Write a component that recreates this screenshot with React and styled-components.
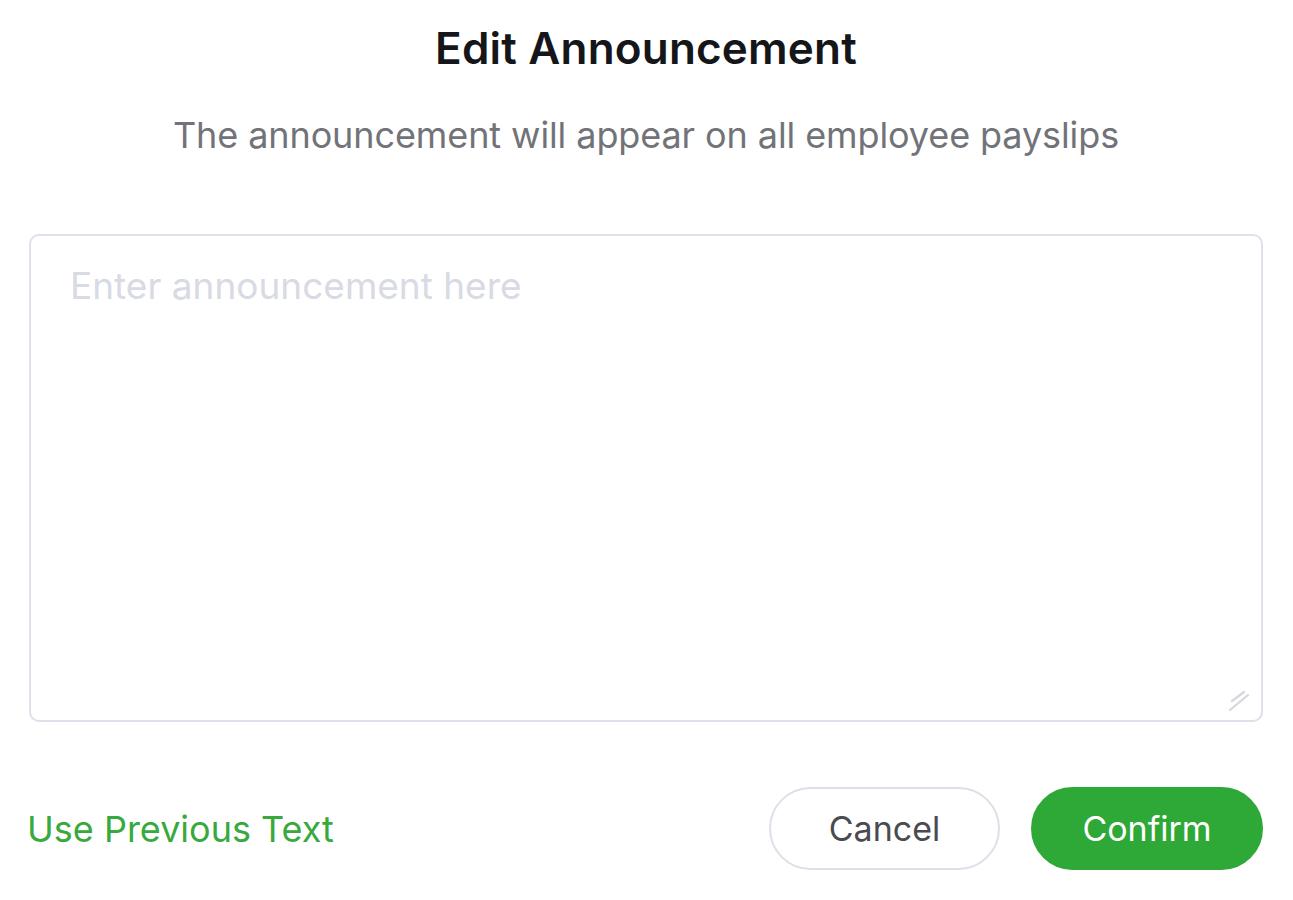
import React, { useState } from 'react';
import styled, { createGlobalStyle } from 'styled-components';

const GlobalStyle = createGlobalStyle`
  body {
    margin: 0;
    background: #ffffff;
    font-family: Inter, "Noto Sans", sans-serif;
  }
`;

const Dialog = styled.div`
  box-sizing: border-box;
  width: 1293px;
  height: 900px;
  padding: 23px 30px 0 29px;
  display: flex;
  flex-direction: column;
  align-items: stretch;
`;

const Title = styled.h1`
  margin: 0;
  text-align: center;
  font-size: 44px;
  line-height: 50px;
  font-weight: 600;
  letter-spacing: 0.2px;
  color: #15161a;
`;

const Subtitle = styled.p`
  margin: 40px 0 0;
  text-align: center;
  font-size: 36px;
  line-height: 44px;
  font-weight: 400;
  letter-spacing: -0.1px;
  color: #727379;
`;

const Field = styled.div`
  position: relative;
  margin-top: 77px;
  height: 488px;
`;

const TextArea = styled.textarea`
  box-sizing: border-box;
  display: block;
  width: 100%;
  height: 100%;
  padding: 28px 39px;
  border: 2px solid #dfe0ea;
  border-radius: 10px;
  font-family: inherit;
  font-size: 37px;
  line-height: 44px;
  color: #222;
  resize: none;
  outline: none;

  &::placeholder {
    color: #d8dae4;
  }
`;

const Grip = styled.svg`
  position: absolute;
  right: 12px;
  bottom: 10px;
  width: 24px;
  height: 22px;
  pointer-events: none;
`;

const Footer = styled.div`
  margin-top: 65px;
  display: flex;
  align-items: center;
  justify-content: space-between;
`;

const LinkButton = styled.button`
  background: none;
  border: none;
  padding: 0;
  margin-left: -2px;
  font-family: inherit;
  font-size: 36px;
  color: #38a93c;
  cursor: pointer;
`;

const Actions = styled.div`
  display: flex;
  gap: 31px;
`;

const PillButton = styled.button`
  box-sizing: border-box;
  width: ${(p) => (p.$primary ? '232px' : '231px')};
  height: 83px;
  border-radius: 42px;
  font-family: inherit;
  font-size: 34px;
  cursor: pointer;
  border: 2px solid ${(p) => (p.$primary ? '#2ea836' : '#dedfe8')};
  background: ${(p) => (p.$primary ? '#2ea836' : '#ffffff')};
  color: ${(p) => (p.$primary ? '#ffffff' : '#4a4b50')};
`;

export default function App() {
  const [text, setText] = useState('');

  return (
    <>
      <GlobalStyle />
      <Dialog>
        <Title>Edit Announcement</Title>
        <Subtitle>The announcement will appear on all employee payslips</Subtitle>
        <Field>
          <TextArea
            value={text}
            onChange={(e) => setText(e.target.value)}
            placeholder="Enter announcement here"
          />
          <Grip viewBox="0 0 24 22">
            <g stroke="#d4d6e0" strokeWidth="2.2" strokeLinecap="round">
              <line x1="5" y1="11" x2="17" y2="2" />
              <line x1="3" y1="20" x2="21" y2="5" />
            </g>
          </Grip>
        </Field>
        <Footer>
          <LinkButton onClick={() => setText('')}>Use Previous Text</LinkButton>
          <Actions>
            <PillButton>Cancel</PillButton>
            <PillButton $primary>Confirm</PillButton>
          </Actions>
        </Footer>
      </Dialog>
    </>
  );
}
